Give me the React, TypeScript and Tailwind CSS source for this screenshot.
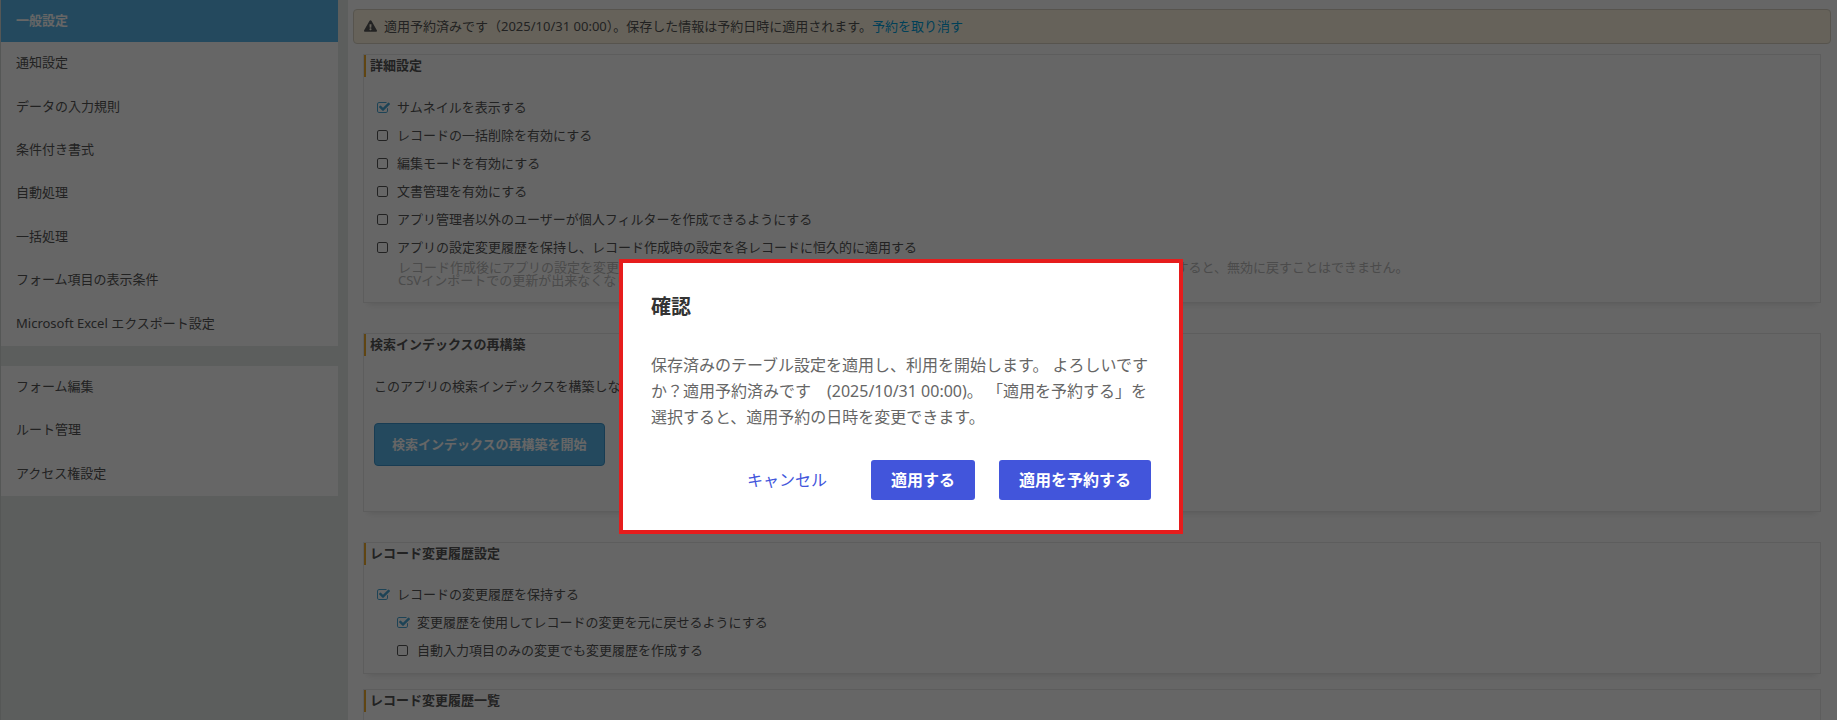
import type { ReactNode } from "react";
import { FaExclamationTriangle } from "react-icons/fa";

const settingMenu = [
  "一般設定",
  "通知設定",
  "データの入力規則",
  "条件付き書式",
  "自動処理",
  "一括処理",
  "フォーム項目の表示条件",
  "Microsoft Excel エクスポート設定",
];

const otherMenu = ["フォーム編集", "ルート管理", "アクセス権設定"];

const detailOptions = [
  { id: "thumbnail", label: "サムネイルを表示する", checked: true },
  { id: "bulkDelete", label: "レコードの一括削除を有効にする", checked: false },
  { id: "editMode", label: "編集モードを有効にする", checked: false },
  { id: "documents", label: "文書管理を有効にする", checked: false },
  {
    id: "personalFilter",
    label: "アプリ管理者以外のユーザーが個人フィルターを作成できるようにする",
    checked: false,
  },
  {
    id: "keepHistory",
    label: "アプリの設定変更履歴を保持し、レコード作成時の設定を各レコードに恒久的に適用する",
    checked: false,
  },
];

type CheckProps = {
  id: string;
  label: string;
  checked?: boolean;
};

function Check({ id, label, checked }: CheckProps) {
  return (
    <div className="flex h-7 items-center gap-[7px]">
      <span className="grid h-3 w-[13px] place-items-center">
        <input
          id={id}
          type="checkbox"
          defaultChecked={checked}
          className="peer col-start-1 row-start-1 h-3 w-[13px] appearance-none"
        />
        <svg
          viewBox="192 128 1664 1408"
          className="pointer-events-none col-start-1 row-start-1 h-[11px] w-[13px] fill-[#555] peer-checked:hidden"
        >
          <path d="M1312 256h-832q-66 0-113 47t-47 113v832q0 66 47 113t113 47h832q66 0 113-47t47-113v-832q0-66-47-113t-113-47zm288 160v832q0 119-84.5 203.5t-203.5 84.5h-832q-119 0-203.5-84.5t-84.5-203.5v-832q0-119 84.5-203.5t203.5-84.5h832q119 0 203.5 84.5t84.5 203.5z" />
        </svg>
        <svg
          viewBox="64 128 1664 1408"
          className="pointer-events-none col-start-1 row-start-1 hidden h-[11px] w-[13px] fill-[#4aa8d8] peer-checked:block"
        >
          <path d="M1472 930v318q0 119-84.5 203.5t-203.5 84.5h-832q-119 0-203.5-84.5t-84.5-203.5v-832q0-119 84.5-203.5t203.5-84.5h832q63 0 117 25 15 7 18 23 3 17-9 29l-49 49q-10 10-23 10-3 0-9-2-23-6-45-6h-832q-66 0-113 47t-47 113v832q0 66 47 113t113 47h832q66 0 113-47t47-113v-254q0-13 9-22l64-64q10-10 23-10 6 0 12 3 20 8 20 29zm231-489l-814 814q-24 24-57 24t-57-24l-430-430q-24-24-24-57t24-57l110-110q24-24 57-24t57 24l263 263 647-647q24-24 57-24t57 24l110 110q24 24 24 57t-24 57z" />
        </svg>
      </span>
      <label htmlFor={id}>{label}</label>
    </div>
  );
}

function Panel({
  title,
  className = "",
  children,
}: {
  title: string;
  className?: string;
  children?: ReactNode;
}) {
  return (
    <section
      className={`border border-[#e8e8e8] shadow-[0_6px_6px_-5px_rgba(0,0,0,0.12)] ${className}`}
    >
      <h2 className="h-[22px] border-l-2 border-[#f0ad2e] pl-1 font-bold leading-5">
        {title}
      </h2>
      {children}
    </section>
  );
}

function Sidebar() {
  return (
    <nav className="flex w-[348px] shrink-0 flex-col gap-5 border-l border-[#d5dad8] bg-[#e6ebe9] pr-[10px]">
      <ul className="flex min-h-[346px] flex-col bg-white">
        {settingMenu.map((item, index) => (
          <li
            key={item}
            className={
              index === 0
                ? "flex h-[42px] items-center bg-[#5ab7eb] font-bold text-white"
                : "flex flex-1 items-center"
            }
          >
            <a href="#" className="w-full px-[15px] pb-[3px]">
              {item}
            </a>
          </li>
        ))}
      </ul>
      <ul className="flex min-h-[130px] flex-col bg-white">
        {otherMenu.map((item) => (
          <li key={item} className="flex flex-1 items-center">
            <a href="#" className="w-full px-[15px] pb-[3px]">
              {item}
            </a>
          </li>
        ))}
      </ul>
    </nav>
  );
}

function ConfirmDialog() {
  return (
    <div className="fixed inset-0 flex items-start justify-center bg-black/60 pt-[259px] pr-[35px]">
      <div
        role="dialog"
        aria-modal="true"
        aria-labelledby="confirmTitle"
        className="w-[564px] border-4 border-[#e61c1c] bg-white px-7 pt-7 pb-[30px] text-base"
      >
        <h2 id="confirmTitle" className="text-xl leading-8 font-bold text-[#333]">
          確認
        </h2>
        <p className="mt-[29px] leading-[26px] whitespace-nowrap text-[#666]">
          保存済みのテーブル設定を適用し、利用を開始します。 よろしいです
          <br />
          か？適用予約済みです　(2025/10/31 00:00)。 「適用を予約する」を
          <br />
          選択すると、適用予約の日時を変更できます。
        </p>
        <div className="mt-[30px] flex justify-end gap-6">
          <button type="button" className="h-10 px-5 text-[#4255db]">
            キャンセル
          </button>
          <button
            type="button"
            className="h-10 rounded-[3px] bg-[#4255db] px-5 font-bold text-white"
          >
            適用する
          </button>
          <button
            type="button"
            className="h-10 rounded-[3px] bg-[#4255db] px-5 font-bold text-white"
          >
            適用を予約する
          </button>
        </div>
      </div>
    </div>
  );
}

export default function App() {
  return (
    <div
      lang="ja"
      className="flex min-h-screen bg-white font-['Noto_Sans','Noto_Sans_CJK_JP',sans-serif] text-[13px] leading-5 text-[#555]"
    >
      <Sidebar />

      <main className="flex min-w-0 flex-1 flex-col pt-[9px] pr-[6px] pl-[5px]">
        {/* 適用予約のお知らせ */}
        <div className="flex h-[35px] items-center gap-[7px] rounded-sm border border-[#d9d3c4] bg-[#fff6e2] px-[10px] pb-[2px]">
          <FaExclamationTriangle className="h-3 w-[13px]" />
          <p>
            適用予約済みです（2025/10/31 00:00）。保存した情報は予約日時に適用されます。
            <a href="#" className="text-[#00a0dc]">
              予約を取り消す
            </a>
          </p>
        </div>

        <div className="flex flex-1 flex-col px-[10px] pt-[10px]">
          <Panel title="詳細設定" className="pb-[15px]">
            <div className="mt-4 px-[13px]">
              {detailOptions.map((option) => (
                <Check key={option.id} {...option} />
              ))}
              <p className="pl-[21px] leading-[13px] whitespace-nowrap text-[#bbb]">
                レコード作成後にアプリの設定を変更しても、作成済みのレコードには作成時の設定が引き続き適用されます。この機能を一度有効にすると、無効に戻すことはできません。
                <br />
                CSVインポートでの更新が出来なくなります。
              </p>
            </div>
          </Panel>

          <Panel title="検索インデックスの再構築" className="mt-[30px] pb-[45px]">
            <div className="px-[10px] pt-5">
              <p>このアプリの検索インデックスを構築しなおします。</p>
              <button
                type="button"
                className="mt-[27px] h-[43px] rounded-sm border border-[#3d97cf] bg-[#5ab7eb] px-[17px] pb-[2px] font-bold text-white"
              >
                検索インデックスの再構築を開始
              </button>
            </div>
          </Panel>

          <Panel title="レコード変更履歴設定" className="mt-[30px] pb-[9px]">
            <div className="mt-[15px] px-[13px]">
              <Check id="recordHistory" label="レコードの変更履歴を保持する" checked />
              <div className="pl-5">
                <Check
                  id="revertHistory"
                  label="変更履歴を使用してレコードの変更を元に戻せるようにする"
                  checked
                />
                <Check
                  id="autoHistory"
                  label="自動入力項目のみの変更でも変更履歴を作成する"
                />
              </div>
            </div>
          </Panel>

          <Panel title="レコード変更履歴一覧" className="mt-[15px] flex-1 border-b-0" />
        </div>
      </main>

      <ConfirmDialog />
    </div>
  );
}
